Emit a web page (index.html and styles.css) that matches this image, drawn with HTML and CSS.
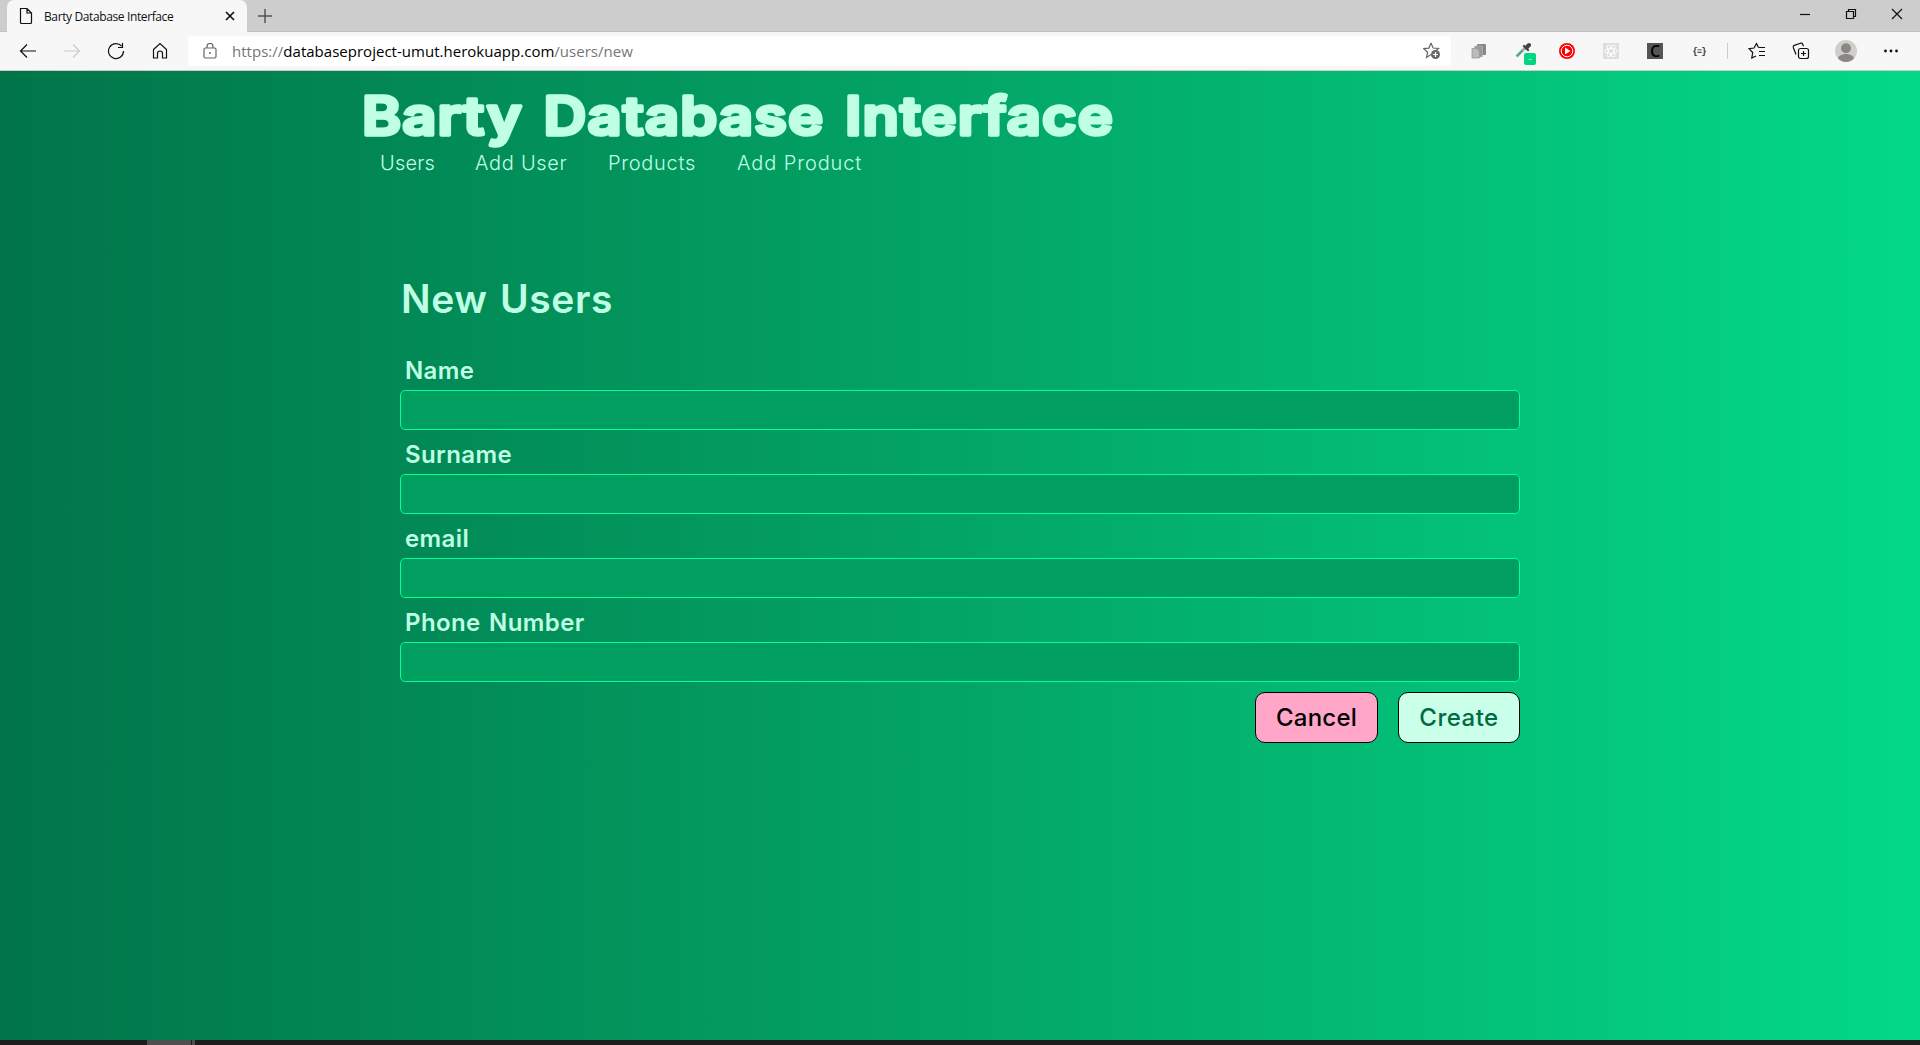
FILE: index.html
```html
<!DOCTYPE html>
<html lang="en">
<head>
<meta charset="utf-8">
<title>Barty Database Interface</title>
<link rel="stylesheet" href="styles.css">
</head>
<body>
<div class="tabbar">
  <div class="tab">
    <svg class="doc" width="14" height="18" viewBox="0 0 14 18"><path d="M1.5 1.5h6.5l4.5 4.5v9.5a1 1 0 0 1-1 1h-9a1 1 0 0 1-1-1zM8 1.5v4.5h4.5"/></svg>
    <span class="tab-title">Barty Database Interface</span>
    <svg width="10" height="10" viewBox="0 0 10 10"><path class="bold" d="M1 1l8 8M9 1l-8 8"/></svg>
  </div>
  <svg class="plus" width="14" height="14" viewBox="0 0 14 14"><path d="M7 0v14M0 7h14"/></svg>
  <div class="window-buttons">
    <svg width="12" height="12" viewBox="0 0 12 12"><path d="M1 6.5h10"/></svg>
    <svg width="12" height="12" viewBox="0 0 12 12"><path d="M1.5 3.5h7v7h-7zM3.5 3.5v-2h7v7h-2"/></svg>
    <svg width="12" height="12" viewBox="0 0 12 12"><path d="M1 1l10 10M11 1L1 11"/></svg>
  </div>
</div>
<div class="toolbar">
  <div class="nav-icons">
    <svg width="18" height="16" viewBox="0 0 18 16"><path d="M17 8H1.5M8 1.5L1.5 8 8 14.500"/></svg>
    <svg class="disabled" width="18" height="16" viewBox="0 0 18 16"><path d="M1 8h15.500M10 1.500L16.500 8 10 14.500"/></svg>
    <svg width="18" height="18" viewBox="0 0 18 18"><path d="M16.500 9A7.500 7.500 0 1 1 14.500 4M15.500 1v4.500H11"/></svg>
    <svg width="18" height="18" viewBox="0 0 18 18"><path d="M2.500 7.500L9 1.500l6.500 6v8.500h-4v-4.500a2.500 2.500 0 0 0-5 0V16h-4z"/></svg>
  </div>
  <div class="address">
    <svg class="lock" width="14" height="16" viewBox="0 0 14 16"><rect x="1" y="5" width="12" height="10" rx="1.500"/><path d="M4 5V3.500a3 3 0 0 1 6 0V5"/><circle class="dot" cx="7" cy="10" r="1"/></svg>
    <div class="url">https://<b>databaseproject-umut.herokuapp.com</b>/users/new</div>
    <svg class="star" width="18" height="18" viewBox="0 0 18 18"><path d="M8 1l2.100 5 5.400.5-4.100 3.500M8 12.500L3.500 15.500l1.200-5.300L.8 6.600l5.100-.5L8 1"/><circle class="dot" cx="12.500" cy="12.500" r="4.500"/><path class="white" d="M12.500 10v5M10 12.500h5"/></svg>
  </div>
  <div class="extensions">
    <svg width="16" height="16" viewBox="0 0 16 16"><rect class="g1" x="6" y="1" width="9" height="11" rx="1"/><rect class="g2" x="3.500" y="3" width="8" height="11" rx="1"/><path class="g3" d="M1 5.500h5l2.500 2.500v7H1z"/></svg>
    <div class="picker">
      <svg width="18" height="18" viewBox="0 0 18 18"><path class="glass" d="M1.500 14.500L10 6"/><path class="liquid" d="M2 14L7.500 8.500"/><path class="bulb" d="M9 4l4 4"/><path class="knob" d="M11.500 5.500l2.500-2.500"/></svg>
      <span class="badge">–</span>
    </div>
    <svg width="16" height="16" viewBox="0 0 16 16"><circle class="red" cx="8" cy="8" r="8"/><circle class="ring" cx="8" cy="8" r="5.800"/><path class="play" d="M6 4.500L11.500 8 6 11.500z"/></svg>
    <svg width="16" height="16" viewBox="0 0 16 16"><rect class="pale" width="16" height="16"/><g class="atom"><ellipse cx="8" cy="8" rx="6.500" ry="2.500"/><ellipse cx="8" cy="8" rx="6.500" ry="2.500" transform="rotate(60 8 8)"/><ellipse cx="8" cy="8" rx="6.500" ry="2.500" transform="rotate(120 8 8)"/></g></svg>
    <div class="letter-c">C</div>
    <div class="braces">{≡}</div>
  </div>
  <div class="divider"></div>
  <div class="browser-icons">
    <svg width="18" height="18" viewBox="0 0 18 18"><path d="M10.500 5.500L8.500 1.500 6 6l-5 .7L4.700 10.500 3.800 16 8 14M10.500 5.500H17M11 9.500h6M11 13.500h6"/></svg>
    <svg width="18" height="18" viewBox="0 0 18 18"><rect x="6.500" y="6.500" width="10" height="10" rx="2"/><path d="M11.500 9v5M9 11.500h5M4 12.500L1.300 5.500Q.8 4 2.300 3.400L8.500 1.200Q10 .8 10.600 2l.9 2.300"/></svg>
    <svg class="avatar" width="22" height="22" viewBox="0 0 22 22"><circle class="av-bg" cx="11" cy="11" r="11"/><circle class="av-fg" cx="11" cy="8.300" r="5"/><path class="av-fg" d="M3 18.500c1-6 15-6 16 0a11 11 0 0 1-16 0z"/></svg>
    <svg width="14" height="4" viewBox="0 0 14 4"><g class="more"><circle cx="1.500" cy="2" r="1.400"/><circle cx="7" cy="2" r="1.400"/><circle cx="12.500" cy="2" r="1.400"/></g></svg>
  </div>
</div>
<div class="page">
  <div class="container">
    <h1><svg class="brand" width="800" height="66"><text x="2" y="48" textLength="752" lengthAdjust="spacingAndGlyphs">Barty Database Interface</text></svg></h1>
    <nav>
      <a class="n1">Users</a><a class="n2">Add User</a><a class="n3">Products</a><a class="n4">Add Product</a>
    </nav>
    <form>
      <h2>New Users</h2>
      <label>Name</label><input type="text">
      <label>Surname</label><input type="text">
      <label>email</label><input type="text">
      <label>Phone Number</label><input type="text">
      <div class="actions"><button type="button" class="cancel">Cancel</button><button type="button" class="create">Create</button></div>
    </form>
  </div>
</div>
<div class="taskbar"><i></i><i></i></div>
</body>
</html>
```
FILE: styles.css
```css
* { box-sizing: border-box; }
body { margin: 0; height: 1045px; overflow: hidden; display: flex; flex-direction: column; font-family: Inter, "Liberation Sans", sans-serif; }
svg { display: block; flex: none; fill: none; stroke: #111; stroke-width: 1.2; }
.tabbar { height: 32px; background: #cdcdcd; display: flex; align-items: center; padding-left: 7px; border-bottom: 1px solid #c0c0c0; }
.tab { width: 240px; height: 32px; margin-bottom: -1px; background: #f7f7f7; border-radius: 7px 7px 0 0; display: flex; align-items: center; padding: 0 12px; }
.tab-title { flex: 1; margin-left: 11px; font: 12px "Open Sans", sans-serif; letter-spacing: -0.38px; color: #111; white-space: nowrap; }
.bold { stroke-width: 1.7; }
.plus { margin-left: 11px; stroke: #555; stroke-width: 1.5; }
.window-buttons { margin-left: auto; display: flex; gap: 34px; padding-right: 17px; margin-top: -3px; }
.toolbar { height: 39px; background: #f7f7f7; border-bottom: 1px solid #ccc; display: flex; align-items: center; }
.nav-icons { display: flex; align-items: center; gap: 26px; padding-left: 19px; width: 188px; flex: none; }
.disabled { stroke: #ccc; }
.address { width: 1263px; height: 30px; background: #fff; border-radius: 4px; display: flex; align-items: center; padding: 0 10px 0 15px; flex: none; }
.lock { stroke: #666; }
.dot { fill: #666; stroke: none; }
.star { stroke: #666; }
.white { stroke: #fff; }
.url { margin-left: 15px; flex: 1; font: 15px "Open Sans", sans-serif; color: #767676; letter-spacing: 0.02px; white-space: nowrap; }
.url b { font-weight: 400; color: #000; }
.extensions { display: flex; align-items: center; gap: 28px; margin-left: 20px; }
.g1 { fill: #888; stroke: none; } .g2 { fill: #999; stroke: #bbb; stroke-width: .6; } .g3 { fill: #bbb; stroke: #999; stroke-width: .8; }
.picker { position: relative; width: 16px; height: 18px; }
.glass { stroke: #aaa; stroke-width: 3; } .liquid { stroke: #35b58a; stroke-width: 1.800; } .bulb { stroke: #444; stroke-width: 2.200; stroke-linecap: round; } .knob { stroke: #444; stroke-width: 4; stroke-linecap: round; }
.badge { position: absolute; left: 9px; top: 11px; width: 12px; height: 12px; border-radius: 2px; background: #00d584; color: #fff; font-size: 6px; line-height: 12px; text-align: center; }
.red { fill: #f00; stroke: none; } .ring { stroke: #fff; stroke-width: 1; } .play { fill: #fff; stroke: none; }
.pale { fill: #dedede; stroke: none; } .atom { stroke: #fff; stroke-width: .9; }
.letter-c { width: 16px; height: 16px; background: #555; color: #000; font: 600 16px/16px "Open Sans", sans-serif; text-align: center; }
.braces { width: 16px; font: bold 9px/16px "Liberation Mono", monospace; letter-spacing: -1px; text-align: center; color: #333; padding-top: 1px; }
.divider { width: 1px; height: 16px; background: #ccc; margin-left: 20px; }
.browser-icons { display: flex; align-items: center; margin-left: 20px; gap: 26px; }
.avatar { stroke: none; margin: 0 1px 0 -1px; }
.av-bg { fill: #d0cecb; } .av-fg { fill: #8b8784; } .more { fill: #111; stroke: none; }
.page { height: 969px; background: linear-gradient(to right, #017449, #03a767 52%, #03d988); color: #bfffe4; }
.container { width: 1200px; margin: 0 auto; padding-top: 16px; }
h1 { margin: 0; height: 64px; font-size: 53px; line-height: 64px; }
.brand { overflow: visible; fill: #bfffe4; stroke: #bfffe4; stroke-width: 3.600; stroke-linejoin: round; font: 600 53px Inter, sans-serif; letter-spacing: 1px; word-spacing: 4px; }
nav { display: flex; gap: 41px; padding-left: 20px; height: 24px; font-size: 20px; line-height: 24px; font-weight: 300; white-space: nowrap; letter-spacing: 0.7px; }
.n1 { width: 54px; letter-spacing: 0.2px; } .n2 { width: 92px; } .n3 { width: 88px; } .n4 { letter-spacing: 0.9px; }
form { margin: 90px 40px 0; display: flex; flex-direction: column; }
h2 { margin: 0; padding-left: 1px; font-size: 39px; line-height: 68px; font-weight: 600; letter-spacing: 0.6px; word-spacing: 2px; height: 81px; }
label { height: 43px; margin-bottom: 1px; padding-left: 5px; line-height: 50px; font-size: 24px; font-weight: 600; letter-spacing: 0.4px; word-spacing: 2px; }
input { height: 40px; border: 1px solid #00ff9d; border-radius: 5px; background: #009f60; padding: 0 8px; outline: 0; }
.actions { display: flex; justify-content: flex-end; gap: 20px; margin-top: 10px; }
button { height: 51px; border: 1px solid #000; border-radius: 10px; padding: 0; font: 500 24px Inter, sans-serif; letter-spacing: 0.2px; }
.cancel { width: 123px; background: #ffa6c9; color: #000; }
.create { width: 122px; background: #caffe9; color: #006b43; letter-spacing: 0.5px; }
.taskbar { height: 5px; background: #1d1d1d; display: flex; gap: 1px; padding-left: 147px; }
.taskbar i { width: 44px; background: #4f4f4f; }
.taskbar i + i { width: 3px; }
```
